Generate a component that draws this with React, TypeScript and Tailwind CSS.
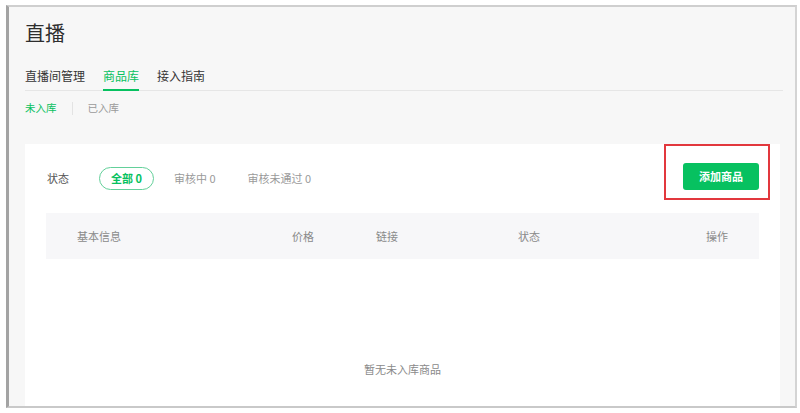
import React from 'react'

const font = { fontFamily: '"Noto Sans CJK SC", "Noto Sans", sans-serif' }

const tabs = ['直播间管理', '商品库', '接入指南']
const filters = ['全部 0', '审核中 0', '审核未通过 0']
const columns = ['基本信息', '价格', '链接', '状态', '操作']

export default function App(): React.JSX.Element {
  return (
    <div className="h-[413px] w-[800px] overflow-hidden bg-white" style={font}>
      {/* captured window frame */}
      <div className="ml-[6px] mt-[5px] flex h-[403px] w-[791px] flex-col border-b-2 border-l-[3px] border-r-2 border-t-2 border-b-[#c9c9c9] border-l-[#a3a3a3] border-r-[#d4d4d4] border-t-[#cfcfcf] bg-[#f7f7f7] pl-[16px] pr-[12px] pt-[12px]">
        <h1 className="text-[20px] leading-[28px] text-[#2e2e2e]">直播</h1>

        <div className="mt-[19px] flex gap-[18px] border-b border-[#e6e6e6]">
          {tabs.map((t, i) => (
            <div
              key={t}
              className={`-mb-px pb-[3px] text-[12px] leading-[20px] ${
                i === 1 ? 'border-b-2 border-[#07c160] text-[#07c160]' : 'border-b-2 border-transparent text-[#353535]'
              }`}
            >
              {t}
            </div>
          ))}
        </div>

        <div className="mt-[9px] flex items-center text-[10.5px] leading-[16px]">
          <span className="text-[#07c160]">未入库</span>
          <span className="mx-[15px] h-[13px] w-px bg-[#e3e3e3]" />
          <span className="text-[#9a9a9a]">已入库</span>
        </div>

        <div className="mr-[3px] mt-[28px] flex-1 bg-white px-[21px] pt-[19px]">
          <div className="flex items-end justify-between">
            <div className="flex h-[23px] items-center text-[11px]">
              <span className="ml-px mr-[30px] text-[#555]">状态</span>
              <div className="flex gap-[8px]">
                {filters.map((f, i) => (
                  <span
                    key={f}
                    className={`flex h-[23px] items-center rounded-full border px-[11px] leading-none ${
                      i === 0 ? 'border-[#63d09a] font-semibold text-[#07c160]' : 'border-transparent text-[#9a9a9a]'
                    }`}
                  >
                    {f}
                  </span>
                ))}
              </div>
            </div>
            <div className="relative">
              <button
                type="button"
                className="flex h-[27px] w-[76px] items-center justify-center rounded-[3px] bg-[#07c160] text-[11px] font-semibold text-white"
              >
                添加商品
              </button>
              <div className="pointer-events-none absolute -bottom-[10px] -left-[19px] -right-[11px] -top-[19px] border-2 border-[#e2383d]" />
            </div>
          </div>

          <div className="mt-[23px] grid h-[46px] grid-cols-[215px_84px_142px_1fr_auto] items-center bg-[#f7f7f9] px-[31px] text-[11px] text-[#8a8a8a]">
            {columns.map((c) => (
              <span key={c}>{c}</span>
            ))}
          </div>

          <p className="mt-[102px] text-center text-[11px] leading-[16px] text-[#8a8a8a]">暂无未入库商品</p>
        </div>
      </div>
    </div>
  )
}
